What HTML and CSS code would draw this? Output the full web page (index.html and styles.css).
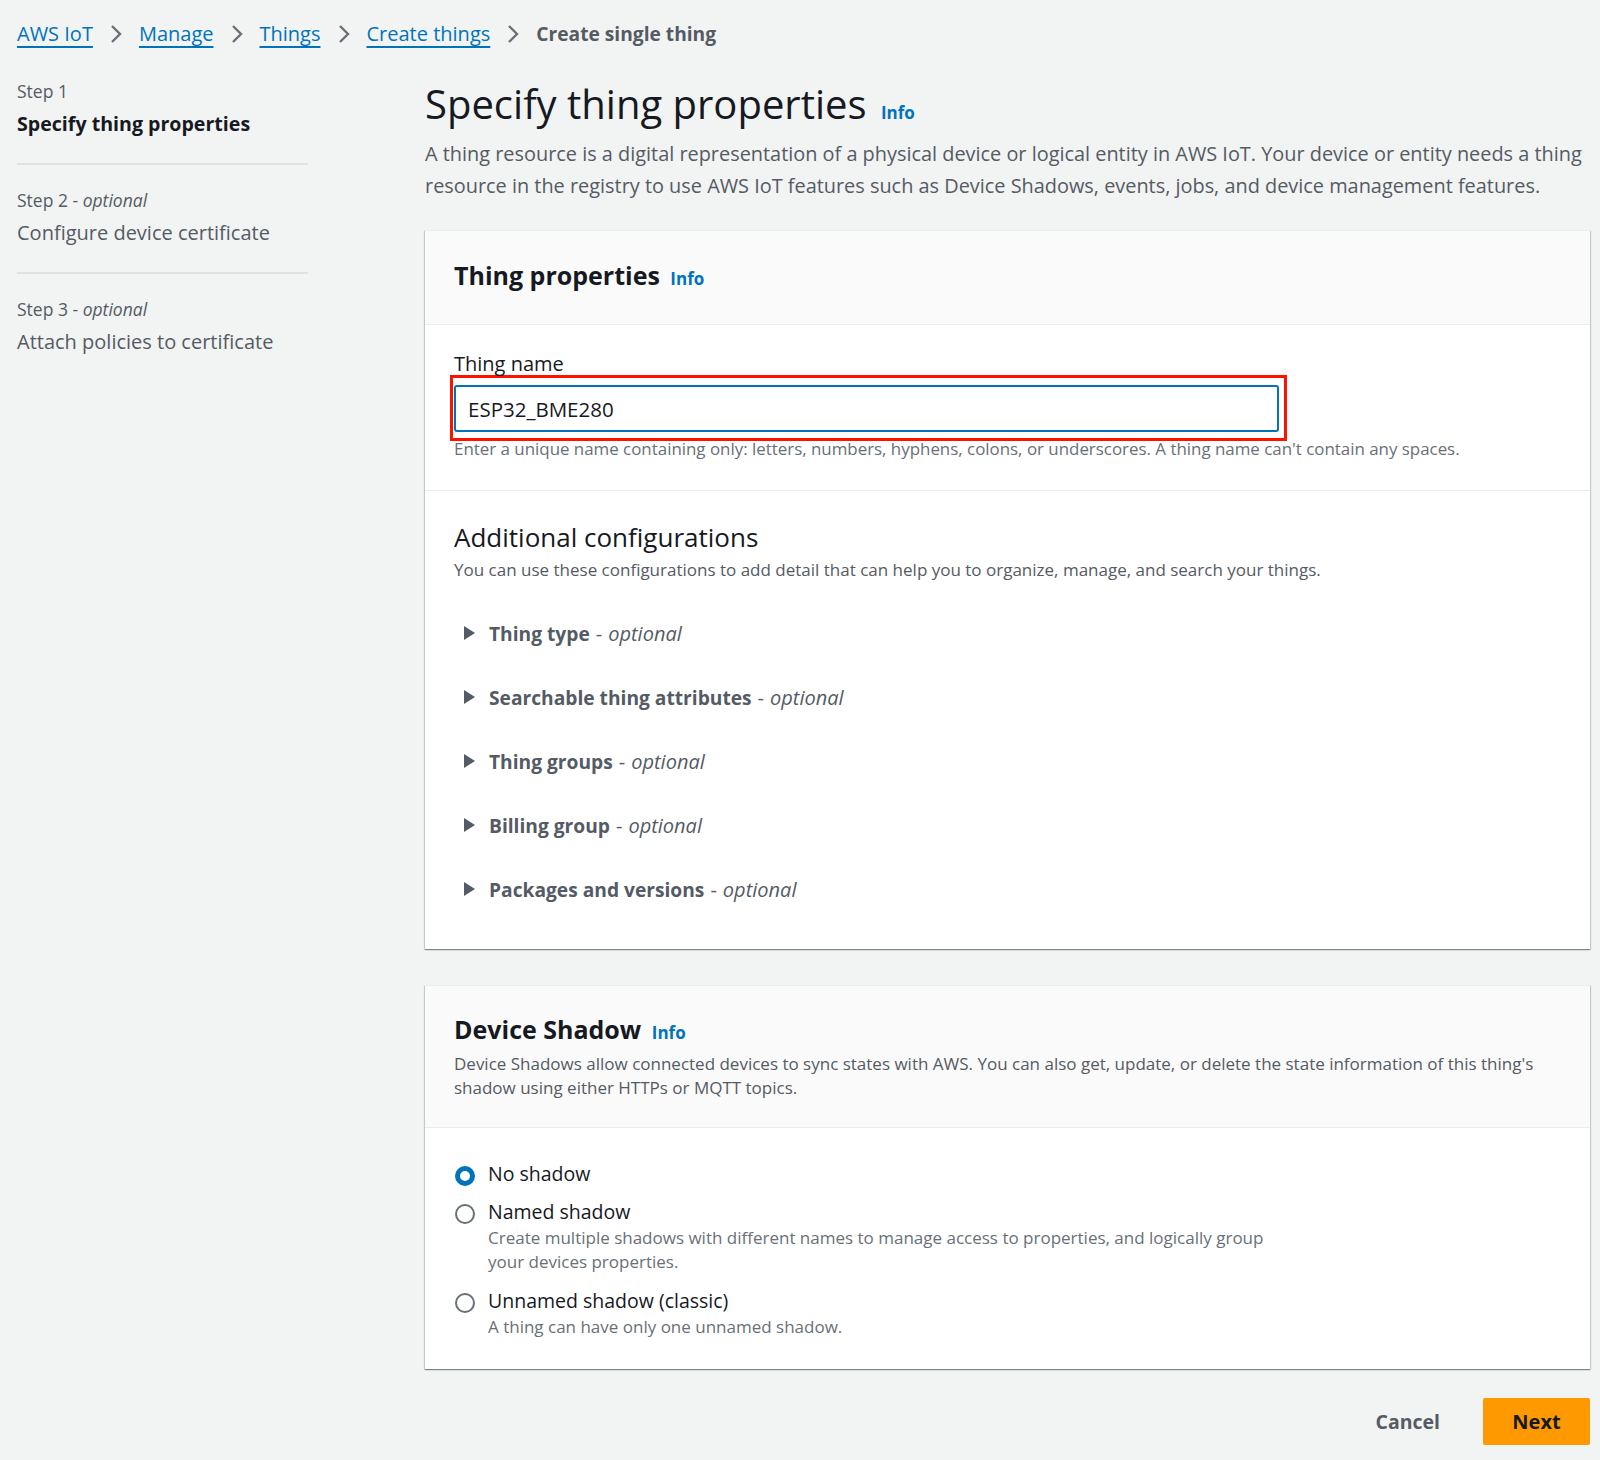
FILE: index.html
```html
<!DOCTYPE html>
<html lang="en">
<head>
  <meta charset="UTF-8">
  <title>Create single thing | AWS IoT</title>
  <link rel="stylesheet" href="styles.css">
</head>
<body>
  <!-- Breadcrumbs -->
  <nav class="breadcrumbs">
    <a href="#">AWS IoT</a>
    <span class="crumb-sep"><svg viewBox="0 0 20 20"><path d="M6 2l8 8-8 8"/></svg></span>
    <a href="#">Manage</a>
    <span class="crumb-sep"><svg viewBox="0 0 20 20"><path d="M6 2l8 8-8 8"/></svg></span>
    <a href="#">Things</a>
    <span class="crumb-sep"><svg viewBox="0 0 20 20"><path d="M6 2l8 8-8 8"/></svg></span>
    <a href="#">Create things</a>
    <span class="crumb-sep"><svg viewBox="0 0 20 20"><path d="M6 2l8 8-8 8"/></svg></span>
    <span class="crumb-current">Create single thing</span>
  </nav>

  <div class="layout">
    <!-- Wizard steps -->
    <ul class="steps">
      <li class="step active">
        <div class="step-num">Step 1</div>
        <div class="step-title">Specify thing properties</div>
      </li>
      <li class="step">
        <div class="step-num">Step 2 - <i>optional</i></div>
        <div class="step-title">Configure device certificate</div>
      </li>
      <li class="step">
        <div class="step-num">Step 3 - <i>optional</i></div>
        <div class="step-title">Attach policies to certificate</div>
      </li>
    </ul>

    <main class="content">
      <div class="page-header">
        <h1>Specify thing properties <a href="#" class="info">Info</a></h1>
        <p>A thing resource is a digital representation of a physical device or logical entity in AWS IoT. Your device or entity needs a thing resource in the registry to use AWS IoT features such as Device Shadows, events, jobs, and device management features.</p>
      </div>

      <!-- Thing properties -->
      <section class="card">
        <div class="card-header">
          <h2>Thing properties <a href="#" class="info">Info</a></h2>
        </div>
        <div class="card-body name-body">
          <label class="field-label" for="thingName">Thing name</label>
          <div class="highlight">
            <input type="text" id="thingName" value="ESP32_BME280">
          </div>
          <div class="field-hint">Enter a unique name containing only: letters, numbers, hyphens, colons, or underscores. A thing name can't contain any spaces.</div>
        </div>
        <div class="card-section">
          <h3>Additional configurations</h3>
          <p class="section-desc">You can use these configurations to add detail that can help you to organize, manage, and search your things.</p>
          <ul class="expanders">
            <li><span class="caret"></span><b>Thing type</b> - <i>optional</i></li>
            <li><span class="caret"></span><b>Searchable thing attributes</b> - <i>optional</i></li>
            <li><span class="caret"></span><b>Thing groups</b> - <i>optional</i></li>
            <li><span class="caret"></span><b>Billing group</b> - <i>optional</i></li>
            <li><span class="caret"></span><b>Packages and versions</b> - <i>optional</i></li>
          </ul>
        </div>
      </section>

      <!-- Device Shadow -->
      <section class="card">
        <div class="card-header shadow-header">
          <h2>Device Shadow <a href="#" class="info">Info</a></h2>
          <p class="section-desc">Device Shadows allow connected devices to sync states with AWS. You can also get, update, or delete the state information of this thing's shadow using either HTTPs or MQTT topics.</p>
        </div>
        <div class="card-body radios">
          <label class="radio">
            <span class="radio-dot checked"></span>
            <span>
              <span class="radio-label">No shadow</span>
            </span>
          </label>
          <label class="radio">
            <span class="radio-dot"></span>
            <span>
              <span class="radio-label">Named shadow</span>
              <span class="radio-desc">Create multiple shadows with different names to manage access to properties, and logically group your devices properties.</span>
            </span>
          </label>
          <label class="radio">
            <span class="radio-dot"></span>
            <span>
              <span class="radio-label">Unnamed shadow (classic)</span>
              <span class="radio-desc">A thing can have only one unnamed shadow.</span>
            </span>
          </label>
        </div>
      </section>

      <div class="actions">
        <button class="btn-link">Cancel</button>
        <button class="btn-primary">Next</button>
      </div>
    </main>
  </div>
</body>
</html>
```

FILE: styles.css
```css
/* General */
body {
  margin: 0;
  background: #f2f3f3;
  color: #16191f;
  font-family: "Open Sans", "Noto Sans", sans-serif;
}

a {
  color: #0073bb;
}

/* Breadcrumbs */
.breadcrumbs {
  display: flex;
  align-items: center;
  padding: 19px 17px 0;
  height: 29px;
  font-size: 20px;
}

.breadcrumbs a {
  text-decoration: underline;
  text-underline-offset: 5px;
}

.crumb-sep {
  display: inline-flex;
  margin: 0 13px;
}

.crumb-sep svg {
  width: 20px;
  height: 20px;
  fill: none;
  stroke: #687078;
  stroke-width: 2.4;
}

.crumb-current {
  color: #545b64;
  font-weight: 700;
  font-size: 19.2px;
}

/* Layout */
.layout {
  display: grid;
  grid-template-columns: 291px 1fr;
  column-gap: 117px;
  padding: 0 10px 0 17px;
}

/* Steps */
.steps {
  list-style: none;
  margin: 0;
  padding: 31px 0 0;
}

.step {
  padding-bottom: 25px;
  margin-bottom: 23px;
  border-bottom: 2px solid #dfe2e2;
}

.step:last-child {
  border-bottom: none;
}

.step-num {
  font-size: 17.5px;
  line-height: 24px;
  color: #545b64;
  margin-bottom: 7px;
}

.step-title {
  font-size: 20px;
  line-height: 28px;
  color: #545b64;
}

.step.active .step-title {
  color: #16191f;
  font-weight: 700;
  font-size: 19.6px;
}

/* Page header */
.page-header {
  padding-top: 31px;
  margin-bottom: 28px;
}

.page-header h1 {
  margin: 0;
  font-size: 40px;
  font-weight: 400;
  line-height: 50px;
}

.page-header p {
  margin: 0;
  font-size: 19.9px;
  line-height: 32px;
  color: #545b64;
}

.info {
  font-size: 17px;
  font-weight: 700;
  text-decoration: none;
  margin-left: 4px;
}

/* Cards */
.card {
  background: #fff;
  border-top: 1px solid #eaeded;
  box-shadow: 0 1px 1px 0 rgba(0, 28, 36, 0.3), 1px 1px 1px 0 rgba(0, 28, 36, 0.15), -1px 1px 1px 0 rgba(0, 28, 36, 0.15);
  margin-bottom: 36px;
}

.card-header {
  background: #fafafa;
  border-bottom: 1px solid #eaeded;
  padding: 25px 29px 26px;
}

.card-header h2 {
  margin: 0;
  font-size: 25px;
  font-weight: 700;
  line-height: 38px;
}

.card-body {
  padding: 24px 29px 28px;
}

.name-body {
  padding-top: 28px;
  padding-bottom: 31px;
}

.field-label {
  display: block;
  font-size: 20px;
  line-height: 22px;
}

.highlight {
  border: 3px solid #ff1100;
  padding: 7px 5px 6px 1px;
  margin-left: -4px;
  width: 825px;
}

.highlight input {
  display: block;
  width: 100%;
  box-sizing: border-box;
  height: 47px;
  border: 2px solid #0073bb;
  border-radius: 3px;
  padding: 0 12px;
  font-family: inherit;
  font-size: 20.5px;
  color: #16191f;
}

.field-hint {
  margin-top: -2px;
  font-size: 16.9px;
  line-height: 20px;
  color: #687078;
}

.card-section {
  border-top: 1px solid #eaeded;
  padding: 25px 29px 28px;
}

.card-section h3 {
  margin: 0;
  font-size: 26px;
  font-weight: 400;
  line-height: 42px;
}

.section-desc {
  margin: 0;
  font-size: 17px;
  line-height: 24px;
  color: #545b64;
}

/* Expandable sections */
.expanders {
  list-style: none;
  margin: 0;
  padding: 19px 0 0 10px;
}

.expanders li {
  display: flex;
  align-items: center;
  height: 64px;
  font-size: 20px;
  color: #545b64;
}

.expanders b {
  font-size: 19.2px;
  margin-right: 6px;
}

.expanders i {
  margin-left: 6px;
}

.caret {
  width: 0;
  height: 0;
  border-top: 7px solid transparent;
  border-bottom: 7px solid transparent;
  border-left: 11px solid #545b64;
  margin-right: 14px;
}

/* Device Shadow */
.shadow-header {
  padding-top: 24px;
  padding-bottom: 27px;
}

.radios {
  padding-top: 32px;
  padding-bottom: 26px;
}

.radio {
  display: flex;
  align-items: flex-start;
  margin-bottom: 10px;
}

.radio:last-child {
  margin-bottom: 0;
}

.radio-dot {
  flex: none;
  width: 16px;
  height: 16px;
  border: 2px solid #687078;
  border-radius: 50%;
  margin: 6px 13px 0 1px;
}

.radio-dot.checked {
  width: 10px;
  height: 10px;
  border: 5px solid #0073bb;
}

.radio-label {
  display: block;
  font-size: 19.5px;
  line-height: 28px;
}

.radio-desc {
  display: block;
  max-width: 780px;
  padding-bottom: 4px;
  font-size: 17px;
  line-height: 23.5px;
  color: #687078;
}

/* Actions */
.actions {
  display: flex;
  justify-content: flex-end;
  align-items: center;
  gap: 37px;
  margin-top: -7px;
}

.btn-link,
.btn-primary {
  font-family: inherit;
  font-size: 20px;
  font-weight: 700;
  border: none;
  cursor: pointer;
}

.btn-link {
  background: none;
  color: #545b64;
  font-size: 19.5px;
}

.btn-primary {
  background: #ff9900;
  color: #16191f;
  width: 107px;
  height: 47px;
  border-radius: 2px;
}
```
